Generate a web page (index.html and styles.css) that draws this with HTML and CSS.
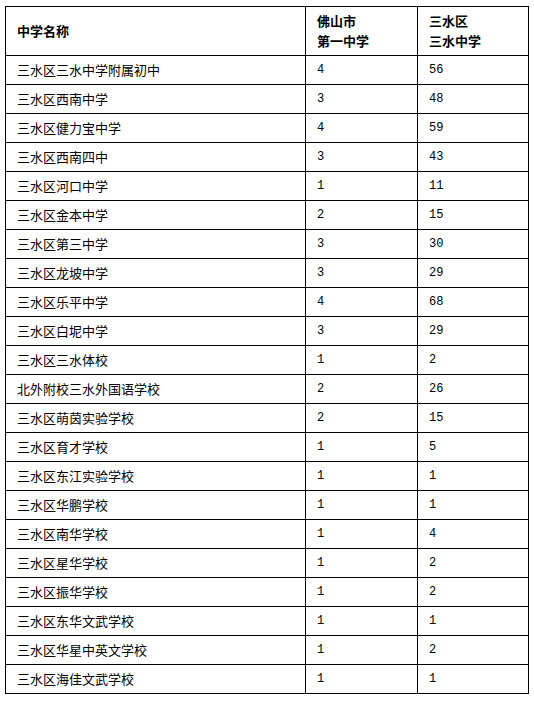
FILE: index.html
```html
<!DOCTYPE html>
<html lang="zh">
<head>
<meta charset="utf-8">
<link rel="stylesheet" href="styles.css">
</head>
<body>
<table class="tbl">
<thead>
<tr><th class="c1">中学名称</th><th class="c2">佛山市<br>第一中学</th><th class="c3">三水区<br>三水中学</th></tr>
</thead>
<tbody>
<tr><td>三水区三水中学附属初中</td><td class="n">4</td><td class="n">56</td></tr>
<tr><td>三水区西南中学</td><td class="n">3</td><td class="n">48</td></tr>
<tr><td>三水区健力宝中学</td><td class="n">4</td><td class="n">59</td></tr>
<tr><td>三水区西南四中</td><td class="n">3</td><td class="n">43</td></tr>
<tr><td>三水区河口中学</td><td class="n">1</td><td class="n">11</td></tr>
<tr><td>三水区金本中学</td><td class="n">2</td><td class="n">15</td></tr>
<tr><td>三水区第三中学</td><td class="n">3</td><td class="n">30</td></tr>
<tr><td>三水区龙坡中学</td><td class="n">3</td><td class="n">29</td></tr>
<tr><td>三水区乐平中学</td><td class="n">4</td><td class="n">68</td></tr>
<tr><td>三水区白坭中学</td><td class="n">3</td><td class="n">29</td></tr>
<tr><td>三水区三水体校</td><td class="n">1</td><td class="n">2</td></tr>
<tr><td>北外附校三水外国语学校</td><td class="n">2</td><td class="n">26</td></tr>
<tr><td>三水区萌茵实验学校</td><td class="n">2</td><td class="n">15</td></tr>
<tr><td>三水区育才学校</td><td class="n">1</td><td class="n">5</td></tr>
<tr><td>三水区东江实验学校</td><td class="n">1</td><td class="n">1</td></tr>
<tr><td>三水区华鹏学校</td><td class="n">1</td><td class="n">1</td></tr>
<tr><td>三水区南华学校</td><td class="n">1</td><td class="n">4</td></tr>
<tr><td>三水区星华学校</td><td class="n">1</td><td class="n">2</td></tr>
<tr><td>三水区振华学校</td><td class="n">1</td><td class="n">2</td></tr>
<tr><td>三水区东华文武学校</td><td class="n">1</td><td class="n">1</td></tr>
<tr><td>三水区华星中英文学校</td><td class="n">1</td><td class="n">2</td></tr>
<tr><td>三水区海佳文武学校</td><td class="n">1</td><td class="n">1</td></tr>
</tbody>
</table>
</body>
</html>
```

FILE: styles.css
```css
html, body {
  margin: 0;
  padding: 0;
  background: #ffffff;
}
body {
  padding: 6px 0 0 5px;
  font-family: "Noto Sans CJK SC", "Noto Sans", sans-serif;
  font-size: 13px;
  color: #000;
}
.tbl {
  border-collapse: collapse;
  table-layout: fixed;
  width: 521px;
}
.tbl th, .tbl td {
  border: 1px solid #000;
  padding: 0 0 0 11px;
  text-align: left;
  vertical-align: middle;
  line-height: 20px;
}
.tbl th {
  height: 48px;
  font-weight: bold;
  font-size: 13px;
}
.tbl td {
  height: 28px;
}
.tbl .c1 { width: 288px; }
.tbl .c2 { width: 100px; }
.tbl .c3 { width: 99px; }
.tbl td.n {
  font-family: "Liberation Mono", "DejaVu Sans Mono", monospace;
  font-size: 12px;
}
```
